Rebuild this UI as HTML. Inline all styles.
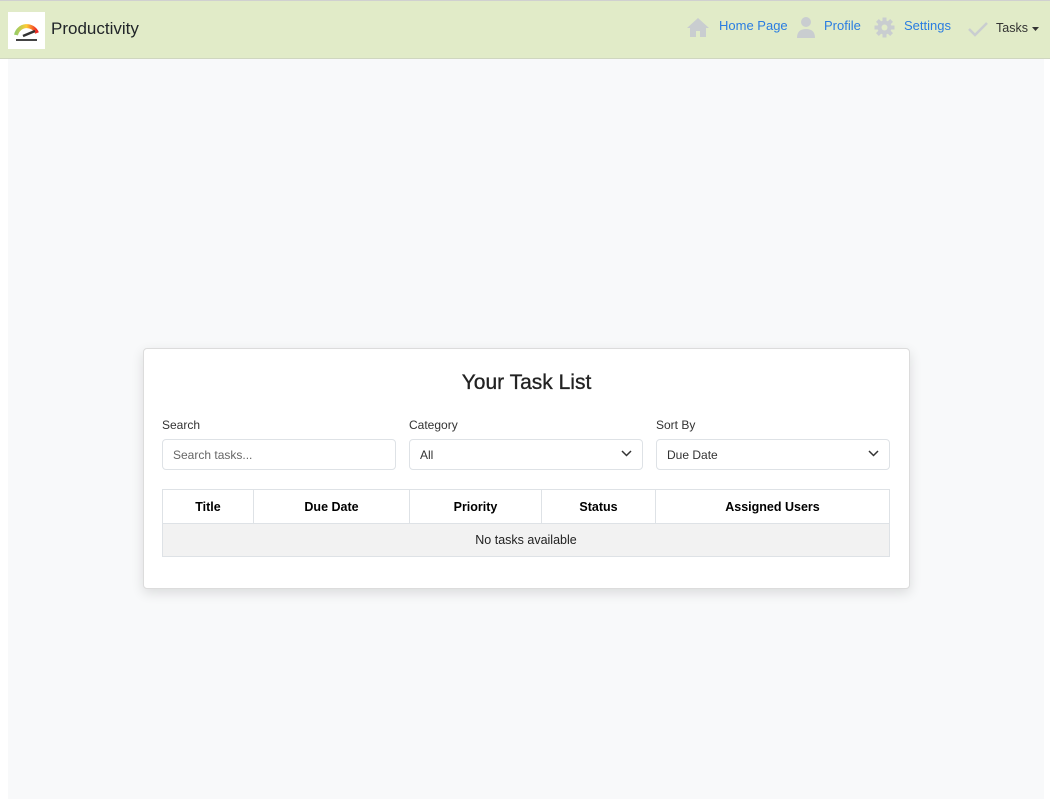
<!DOCTYPE html>
<html><head><style>
*{box-sizing:border-box;margin:0;padding:0}
body{width:1050px;height:799px;background:#fff;font-family:"Liberation Sans",sans-serif;position:relative;overflow:hidden;color:#212529}
.nav{position:absolute;left:0;top:0;width:1050px;height:59px;background:#e1ebc8;border-top:1px solid #d0d0d0;border-bottom:1px solid #cfd6c0}
.main{position:absolute;left:8px;top:59px;width:1036px;height:740px;background:#f8f9fa}
.logo{position:absolute;left:8px;top:11px;width:37px;height:37px;background:#fff}
.brand{position:absolute;left:51px;top:18px;font-size:17px;color:#212529}
.ni{position:absolute;top:17px;font-size:13px;color:#2a7de1}
.card{position:absolute;left:143px;top:348px;width:767px;height:241px;background:#fff;border:1px solid #dcdcdc;border-radius:4px;box-shadow:0 4px 12px rgba(0,0,0,.12)}
h2{position:absolute;top:22px;left:0;width:100%;text-align:center;font-size:21px;font-weight:normal;color:#222;-webkit-text-stroke:0.3px #222}
.lbl{position:absolute;top:69px;font-size:12px;color:#333}
.inp{position:absolute;top:90px;width:234px;height:31px;border:1px solid #dee2e6;border-radius:4px;font-size:12px;padding:8px 10px;color:#333}
.inp svg{position:absolute;right:10px;top:10px}
table{position:absolute;left:18px;top:140px;width:728px;border-collapse:collapse;font-size:12.5px}
th{height:34px;border:1px solid #dee2e6;font-weight:bold;color:#000}
td{height:33px;border:1px solid #dee2e6;background:#f2f2f2;text-align:center;color:#222}
</style></head><body>
<div class="nav">
<div class="logo"><svg width="37" height="37" viewBox="0 0 37 37"><path d="M8 23 A11 11 0 0 1 29 21" stroke="url(#g)" stroke-width="4" fill="none"/><defs><linearGradient id="g"><stop offset="0" stop-color="#9c6"/><stop offset=".5" stop-color="#fc3"/><stop offset="1" stop-color="#e22"/></linearGradient></defs><path d="M15 24 L27 19" stroke="#333" stroke-width="2.5"/><rect x="8" y="27" width="21" height="2" fill="#444"/></svg></div>
<div class="brand">Productivity</div>
<svg style="position:absolute;left:686px;top:16px" width="24" height="21" viewBox="0 0 24 21"><path d="M12 1 L1 11 H4 V20 H10 V14 H14 V20 H20 V11 H23 Z" fill="#c9cdd0"/></svg>
<span class="ni" style="left:719px">Home Page</span>
<svg style="position:absolute;left:796px;top:15px" width="20" height="22" viewBox="0 0 20 22"><circle cx="10" cy="6" r="5" fill="#c9cdd0"/><path d="M1 22 Q1 13 10 13 Q19 13 19 22Z" fill="#c9cdd0"/></svg>
<span class="ni" style="left:824px">Profile</span>
<svg style="position:absolute;left:874px;top:16px" width="21" height="21" viewBox="0 0 21 21"><g fill="#c9cdd0" transform="translate(10.5 10.5)"><circle r="7"/><rect x="-2" y="-10" width="4" height="20"/><rect x="-2" y="-10" width="4" height="20" transform="rotate(45)"/><rect x="-2" y="-10" width="4" height="20" transform="rotate(90)"/><rect x="-2" y="-10" width="4" height="20" transform="rotate(135)"/></g><circle cx="10.5" cy="10.5" r="3" fill="#e1ebc8"/></svg>
<span class="ni" style="left:904px">Settings</span>
<svg style="position:absolute;left:968px;top:20px" width="20" height="16" viewBox="0 0 20 16"><path d="M1 8 L7 14 L19 2" stroke="#c9cdd0" stroke-width="2.5" fill="none"/></svg>
<span class="ni" style="left:996px;top:20px;color:#333;font-size:12.5px">Tasks</span>
<svg style="position:absolute;left:1032px;top:26px" width="8" height="5"><path d="M0 0H7L3.5 4Z" fill="#333"/></svg>
</div>
<div class="main"></div>
<div class="card">
<h2>Your Task List</h2>
<div class="lbl" style="left:18px">Search</div>
<div class="lbl" style="left:265px">Category</div>
<div class="lbl" style="left:512px">Sort By</div>
<div class="inp" style="left:18px;color:#666">Search tasks...</div>
<div class="inp" style="left:265px">All<svg width="11" height="7"><path d="M1 1L5.5 5.5L10 1" stroke="#333" stroke-width="1.5" fill="none"/></svg></div>
<div class="inp" style="left:512px">Due Date<svg width="11" height="7"><path d="M1 1L5.5 5.5L10 1" stroke="#333" stroke-width="1.5" fill="none"/></svg></div>
<table><tr><th style="width:91px">Title</th><th style="width:156px">Due Date</th><th style="width:132px">Priority</th><th style="width:114px">Status</th><th>Assigned Users</th></tr>
<tr><td colspan="5">No tasks available</td></tr></table>
</div>
</body></html>
